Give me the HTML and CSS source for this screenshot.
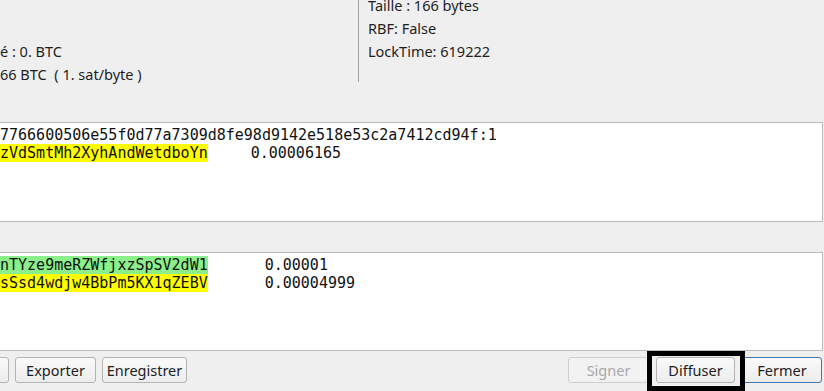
FILE: index.html
```html
<!DOCTYPE html>
<html>
<head>
  <meta charset="utf-8">
  <title>Transaction</title>
  <link rel="stylesheet" href="styles.css">
</head>
<body>
  <div class="dialog">
    <div class="summary">
      <div class="summary-left">
        <div class="line">é : 0. BTC</div>
        <div class="line">66 BTC &nbsp;( 1. sat/byte )</div>
      </div>
      <div class="summary-right">
        <div class="details">
          <div class="line">Taille : 166 bytes</div>
          <div class="line">RBF: False</div>
          <div class="line">LockTime: 619222</div>
        </div>
      </div>
    </div>

    <div class="io-box inputs">
      <div class="io-line">7766600506e55f0d77a7309d8fe98d9142e518e53c2a7412cd94f:1</div>
      <div class="io-line">
        <span class="addr addr--mine">zVdSmtMh2XyhAndWetdboYn</span>
        <span class="amount amount--in">0.00006165</span>
      </div>
    </div>

    <div class="io-box outputs">
      <div class="io-line">
        <span class="addr addr--receive">nTYze9meRZWfjxzSpSV2dW1</span>
        <span class="amount amount--out">0.00001</span>
      </div>
      <div class="io-line">
        <span class="addr addr--mine">sSsd4wdjw4BbPm5KX1qZEBV</span>
        <span class="amount amount--out">0.00004999</span>
      </div>
    </div>

    <div class="button-bar">
      <div class="button-group">
        <button class="btn btn--cut">QR</button>
        <button class="btn btn--export">Exporter</button>
        <button class="btn btn--save">Enregistrer</button>
      </div>
      <div class="button-group">
        <button class="btn btn--sign" disabled>Signer</button>
        <button class="btn btn--broadcast">Diffuser</button>
        <button class="btn btn--close">Fermer</button>
        <div class="highlight-frame"></div>
      </div>
    </div>
  </div>
</body>
</html>
```

FILE: styles.css
```css
body {
  margin: 0;
  padding: 0;
  background-color: #efefef;
  font-family: "Noto Sans", "Open Sans", sans-serif;
  font-size: 14.5px;
  color: #1e1e1e;
  overflow: hidden;
}

.dialog {
  width: 824px;
  height: 391px;
  display: flex;
  flex-direction: column;
}

.summary {
  display: flex;
  height: 82px;
}

.summary-left {
  width: 358px;
  padding-top: 40px;
  box-sizing: border-box;
}

.summary-right {
  border-left: 1px solid #a4a4a4;
  padding-left: 9px;
}

.details {
  margin-top: -6px;
}

.line {
  line-height: 23px;
  white-space: nowrap;
}

.io-box {
  margin-left: -10px;
  width: 833px;
  box-sizing: border-box;
  padding-left: 9px;
  background-color: #fff;
  border: 1px solid #bcbcbc;
  font-family: "DejaVu Sans Mono", monospace;
  font-size: 15px;
  color: #111;
}

.inputs {
  margin-top: 40px;
  height: 100px;
  padding-top: 3px;
}

.outputs {
  margin-top: 30px;
  height: 99px;
  padding-top: 3px;
}

.io-line {
  display: flex;
  line-height: 18px;
  white-space: nowrap;
}

.addr--mine {
  background-color: #ffff00;
}

.addr--receive {
  background-color: #8bf08b;
}

.amount--in {
  margin-left: 43px;
}

.amount--out {
  margin-left: 57px;
}

.button-bar {
  display: flex;
  justify-content: space-between;
  margin-top: 6px;
  margin-left: -72px;
  margin-right: 2px;
}

.button-group {
  display: flex;
  gap: 6px;
  position: relative;
}

.btn {
  height: 26px;
  padding: 0 6px;
  font-family: "Noto Sans", "Open Sans", sans-serif;
  font-size: 14.5px;
  color: #1e1e1e;
  background: linear-gradient(#fafafa, #ececec);
  border: 1px solid #b4b4b4;
  border-radius: 3px;
  white-space: nowrap;
}

.btn--cut {
  width: 81px;
}

.btn--export {
  width: 81px;
}

.btn--save {
  width: 85px;
  padding: 0 2px;
}

.btn--sign {
  width: 81px;
  color: #a8a8a8;
  border-color: #cfcfcf;
  background: #f2f2f2;
}

.btn--broadcast {
  width: 79px;
  margin-left: 1px;
}

.btn--close {
  width: 80px;
  border-color: #3b78b5;
  margin-left: 1px;
}

.highlight-frame {
  position: absolute;
  left: 79px;
  top: -6px;
  width: 98px;
  height: 40px;
  border: 5px solid #000;
  box-sizing: border-box;
}
```
